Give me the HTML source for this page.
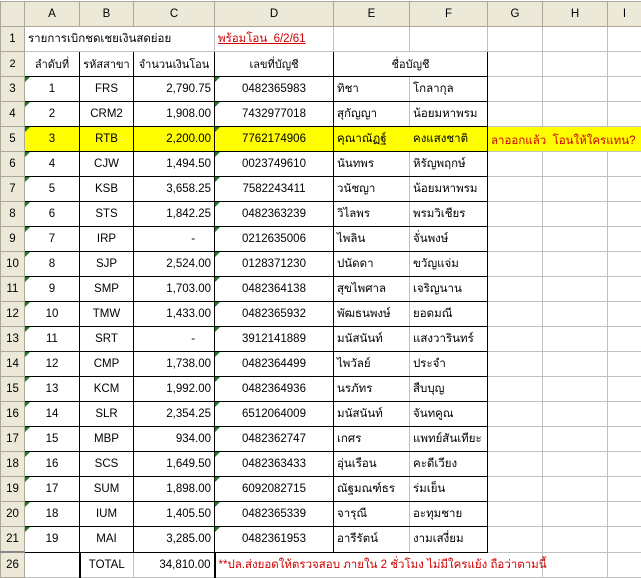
<!DOCTYPE html>
<html><head><meta charset="utf-8"><style>
body{margin:0;width:641px;height:574px;overflow:hidden;background:#fff;font-family:"Liberation Sans","Noto Sans CJK SC",sans-serif;font-size:11.5px;color:#000}
table{border-collapse:collapse;table-layout:fixed;position:absolute;left:0;top:1px;width:641px}
td{border:1px solid #c0c0c0;height:24px;padding:0 3px;white-space:nowrap;overflow:visible;position:relative}
tr.h td{height:24px;background:#ece9d8;text-align:center;border-color:#aca899}
td.r{background:#ece9d8;text-align:center;border-color:#aca899;padding:0}
.c{text-align:center}.n{text-align:right}
.b{border-color:#000}
.bl{border-left-color:#000}.bt{border-top-color:#000}.bb{border-bottom-color:#000}.br{border-right-color:#000}
.y{background:#ffff00}
.red{color:#d00000}
.g::before{content:"";position:absolute;left:0;top:0;border-top:5px solid #1a7f1a;border-right:5px solid transparent}
.th{font-size:11px}
</style></head><body>
<table>
<colgroup><col style="width:24px"><col style="width:55px"><col style="width:54px"><col style="width:81px"><col style="width:119px"><col style="width:76px"><col style="width:78px"><col style="width:55px"><col style="width:65px"><col style="width:34px"></colgroup>
<tr class="h"><td></td><td>A</td><td>B</td><td>C</td><td>D</td><td>E</td><td>F</td><td>G</td><td>H</td><td>I</td></tr>
<tr><td class="r">1</td><td colspan="3" style="border-right-color:#c0c0c0">รายการเบิกชดเชยเงินสดย่อย</td><td class="red" style="text-decoration:underline">พร้อมโอน&nbsp; 6/2/61</td><td></td><td></td><td></td><td></td><td></td></tr>
<tr class="th"><td class="r">2</td><td class="c b">ลำดับที่</td><td class="c b">รหัสสาขา</td><td class="c b">จำนวนเงินโอน</td><td class="c b">เลขที่บัญชี</td><td colspan="2" class="c b">ชื่อบัญชี</td><td class="bl"></td><td></td><td></td></tr>
<tr><td class="r">3</td><td class="c b g">1</td><td class="c b">FRS</td><td class="n b">2,790.75</td><td class="c b g">0482365983</td><td class="b" style="border-right-color:#c0c0c0">ทิชา</td><td class="b" style="border-left-color:#c0c0c0">โกลากุล</td><td class="bl"></td><td></td><td></td></tr>
<tr><td class="r">4</td><td class="c b g">2</td><td class="c b">CRM2</td><td class="n b">1,908.00</td><td class="c b g">7432977018</td><td class="b" style="border-right-color:#c0c0c0">สุกัญญา</td><td class="b" style="border-left-color:#c0c0c0">น้อยมหาพรม</td><td class="bl"></td><td></td><td></td></tr>
<tr class="y"><td class="r">5</td><td class="c b g">3</td><td class="c b">RTB</td><td class="n b">2,200.00</td><td class="c b g">7762174906</td><td class="b" style="border-right-color:#ffff00">คุณาณัฏฐ์</td><td class="b" style="border-left-color:#ffff00">คงแสงชาติ</td><td class="bl red" style="border-right-color:#ffff00"><span style="position:absolute;left:3px;top:5px;z-index:2">ลาออกแล้ว&nbsp; โอนให้ใครแทน?</span></td><td style="border-color:#ffff00;border-top-color:#c0c0c0;border-bottom-color:#c0c0c0"></td><td style="border-left-color:#ffff00"></td></tr>
<tr><td class="r">6</td><td class="c b g">4</td><td class="c b">CJW</td><td class="n b">1,494.50</td><td class="c b g">0023749610</td><td class="b" style="border-right-color:#c0c0c0">นันทพร</td><td class="b" style="border-left-color:#c0c0c0">หิรัญพฤกษ์</td><td class="bl"></td><td></td><td></td></tr>
<tr><td class="r">7</td><td class="c b g">5</td><td class="c b">KSB</td><td class="n b">3,658.25</td><td class="c b g">7582243411</td><td class="b" style="border-right-color:#c0c0c0">วนัชญา</td><td class="b" style="border-left-color:#c0c0c0">น้อยมหาพรม</td><td class="bl"></td><td></td><td></td></tr>
<tr><td class="r">8</td><td class="c b g">6</td><td class="c b">STS</td><td class="n b">1,842.25</td><td class="c b g">0482363239</td><td class="b" style="border-right-color:#c0c0c0">วิไลพร</td><td class="b" style="border-left-color:#c0c0c0">พรมวิเชียร</td><td class="bl"></td><td></td><td></td></tr>
<tr><td class="r">9</td><td class="c b g">7</td><td class="c b">IRP</td><td class="n b">-&nbsp;&nbsp;&nbsp;&nbsp;&nbsp;</td><td class="c b g">0212635006</td><td class="b" style="border-right-color:#c0c0c0">ไพลิน</td><td class="b" style="border-left-color:#c0c0c0">จั่นพงษ์</td><td class="bl"></td><td></td><td></td></tr>
<tr><td class="r">10</td><td class="c b g">8</td><td class="c b">SJP</td><td class="n b">2,524.00</td><td class="c b g">0128371230</td><td class="b" style="border-right-color:#c0c0c0">ปนัดดา</td><td class="b" style="border-left-color:#c0c0c0">ขวัญแจ่ม</td><td class="bl"></td><td></td><td></td></tr>
<tr><td class="r">11</td><td class="c b g">9</td><td class="c b">SMP</td><td class="n b">1,703.00</td><td class="c b g">0482364138</td><td class="b" style="border-right-color:#c0c0c0">สุขไพศาล</td><td class="b" style="border-left-color:#c0c0c0">เจริญนาน</td><td class="bl"></td><td></td><td></td></tr>
<tr><td class="r">12</td><td class="c b g">10</td><td class="c b">TMW</td><td class="n b">1,433.00</td><td class="c b g">0482365932</td><td class="b" style="border-right-color:#c0c0c0">พัฒธนพงษ์</td><td class="b" style="border-left-color:#c0c0c0">ยอดมณี</td><td class="bl"></td><td></td><td></td></tr>
<tr><td class="r">13</td><td class="c b g">11</td><td class="c b">SRT</td><td class="n b">-&nbsp;&nbsp;&nbsp;&nbsp;&nbsp;</td><td class="c b g">3912141889</td><td class="b" style="border-right-color:#c0c0c0">มนัสนันท์</td><td class="b" style="border-left-color:#c0c0c0">แสงวารินทร์</td><td class="bl"></td><td></td><td></td></tr>
<tr><td class="r">14</td><td class="c b g">12</td><td class="c b">CMP</td><td class="n b">1,738.00</td><td class="c b g">0482364499</td><td class="b" style="border-right-color:#c0c0c0">ไพวัลย์</td><td class="b" style="border-left-color:#c0c0c0">ประจำ</td><td class="bl"></td><td></td><td></td></tr>
<tr><td class="r">15</td><td class="c b g">13</td><td class="c b">KCM</td><td class="n b">1,992.00</td><td class="c b g">0482364936</td><td class="b" style="border-right-color:#c0c0c0">นรภัทร</td><td class="b" style="border-left-color:#c0c0c0">สืบบุญ</td><td class="bl"></td><td></td><td></td></tr>
<tr><td class="r">16</td><td class="c b g">14</td><td class="c b">SLR</td><td class="n b">2,354.25</td><td class="c b g">6512064009</td><td class="b" style="border-right-color:#c0c0c0">มนัสนันท์</td><td class="b" style="border-left-color:#c0c0c0">จันทคูณ</td><td class="bl"></td><td></td><td></td></tr>
<tr><td class="r">17</td><td class="c b g">15</td><td class="c b">MBP</td><td class="n b">934.00</td><td class="c b g">0482362747</td><td class="b" style="border-right-color:#c0c0c0">เกศร</td><td class="b" style="border-left-color:#c0c0c0">แพทย์สันเทียะ</td><td class="bl"></td><td></td><td></td></tr>
<tr><td class="r">18</td><td class="c b g">16</td><td class="c b">SCS</td><td class="n b">1,649.50</td><td class="c b g">0482363433</td><td class="b" style="border-right-color:#c0c0c0">อุ่นเรือน</td><td class="b" style="border-left-color:#c0c0c0">คะดีเวียง</td><td class="bl"></td><td></td><td></td></tr>
<tr><td class="r">19</td><td class="c b g">17</td><td class="c b">SUM</td><td class="n b">1,898.00</td><td class="c b g">6092082715</td><td class="b" style="border-right-color:#c0c0c0">ณัฐมณฑ์ธร</td><td class="b" style="border-left-color:#c0c0c0">ร่มเย็น</td><td class="bl"></td><td></td><td></td></tr>
<tr><td class="r">20</td><td class="c b g">18</td><td class="c b">IUM</td><td class="n b">1,405.50</td><td class="c b g">0482365339</td><td class="b" style="border-right-color:#c0c0c0">จารุณี</td><td class="b" style="border-left-color:#c0c0c0">อะทุมชาย</td><td class="bl"></td><td></td><td></td></tr>
<tr><td class="r">21</td><td class="c b g">19</td><td class="c b">MAI</td><td class="n b">3,285.00</td><td class="c b g">0482361953</td><td class="b" style="border-right-color:#c0c0c0">อารีรัตน์</td><td class="b" style="border-left-color:#c0c0c0">งามเสงี่ยม</td><td class="bl"></td><td></td><td></td></tr>
<tr><td class="r" style="border-top:2px solid #888">26</td><td class="bt"></td><td class="c bt" style="border-left:2px solid #000">TOTAL</td><td class="n bt">34,810.00</td><td colspan="4" class="red bt" style="border-left:2px solid #000;border-right-color:#c0c0c0">**ปล.ส่งยอดให้ตรวจสอบ ภายใน 2 ชั่วโมง ไม่มีใครแย้ง ถือว่าตามนี้</td><td></td><td></td></tr>
</table>
</body></html>
